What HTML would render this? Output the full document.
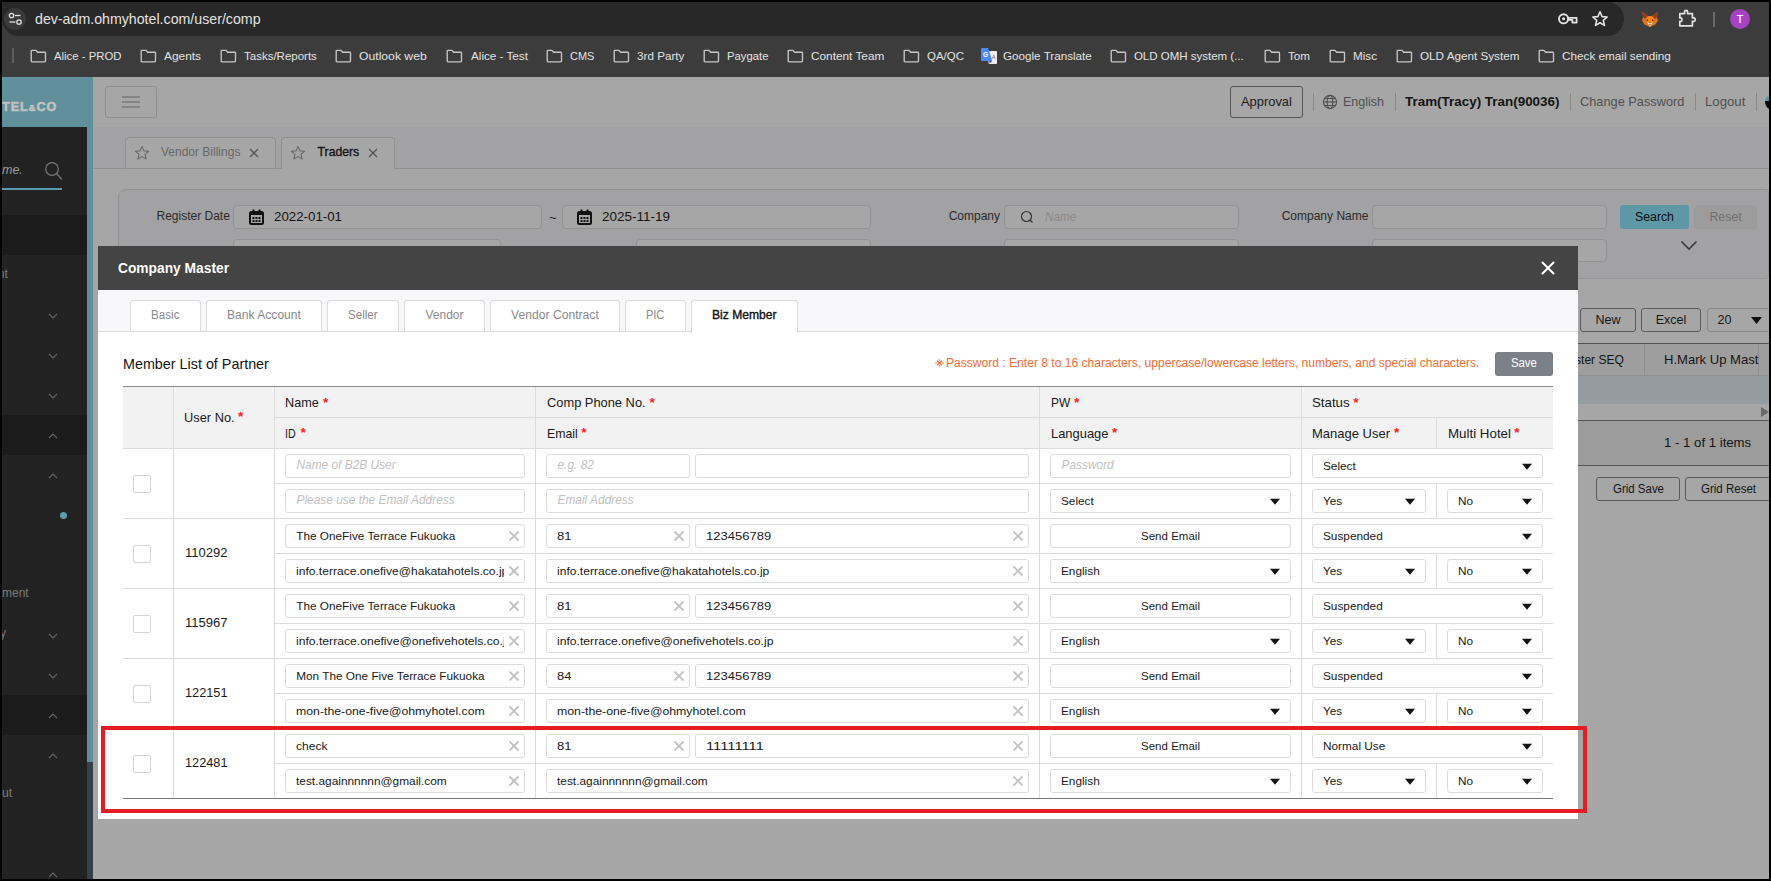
<!DOCTYPE html><html><head><meta charset="utf-8"><style>
html,body{margin:0;padding:0;}
body{width:1771px;height:881px;position:relative;overflow:hidden;background:#000;font-family:"Liberation Sans",sans-serif;}
.r{position:absolute;}
.t{position:absolute;white-space:nowrap;}
</style></head><body>
<div class="r" style="left:2px;top:2px;width:1767px;height:75px;background:#3c3c3c;"></div>
<div class="r" style="left:2px;top:2px;width:1622px;height:34px;background:#282828;border-radius:0 17px 17px 17px;"></div>
<div class="r" style="left:4px;top:8px;width:22px;height:22px;background:#3a3a3a;border-radius:50%;"></div>
<svg class="r" style="left:8px;top:12px;" width="16" height="14" viewBox="0 0 16 14"><g fill="none" stroke="#e3e3e3" stroke-width="1.3"><circle cx="3.5" cy="3.5" r="2.2"/><line x1="7" y1="3.5" x2="12.5" y2="3.5"/><circle cx="11" cy="10" r="2.2"/><line x1="1.5" y1="10" x2="7.5" y2="10"/></g></svg>
<div class="t" style="left:35.00px;top:11.68px;font-size:14.2px;line-height:14.2px;color:#e3e3e3;font-weight:normal;font-style:normal;">dev-adm.ohmyhotel.com/user/comp</div>
<svg class="r" style="left:1557px;top:12px;" width="22" height="14" viewBox="0 0 22 14"><circle cx="6.6" cy="6.8" r="4.6" fill="none" stroke="#e3e3e3" stroke-width="1.9"/><circle cx="6.6" cy="6.8" r="1.5" fill="#e3e3e3"/><path d="M11.2 5.8 H19.6 V10.6 H15.4 V7.8 H11.2 Z" fill="none" stroke="#e3e3e3" stroke-width="1.8" stroke-linejoin="round"/></svg>
<svg class="r" style="left:1591px;top:10px;" width="18" height="18" viewBox="0 0 18 18"><path d="M9 1.8 L11.1 6.6 L16.2 7 L12.3 10.4 L13.5 15.4 L9 12.7 L4.5 15.4 L5.7 10.4 L1.8 7 L6.9 6.6 Z" fill="none" stroke="#e3e3e3" stroke-width="1.6" stroke-linejoin="round"/></svg>
<svg class="r" style="left:1641px;top:11px;" width="18" height="17" viewBox="0 0 18 17"><path d="M1.5 1 L7 5.2 H11 L16.5 1 L16 6.5 L17 9.5 L14.5 13.5 L9 16 L3.5 13.5 L1 9.5 L2 6.5 Z" fill="#e2761b"/><path d="M1.5 1 L7 5.2 L4.5 8 L2 6.5 Z M16.5 1 L11 5.2 L13.5 8 L16 6.5 Z" fill="#9a3b10"/><path d="M4.5 8 L7 5.2 H11 L13.5 8 L12 11 H6 Z" fill="#f6851b"/><path d="M6 11 L9 15.8 L12 11 L9 12.5 Z" fill="#f0e6dc"/><path d="M7.6 13.4 L9 14.6 L10.4 13.4 Z" fill="#333"/><circle cx="6.2" cy="9.3" r="0.8" fill="#3a1a08"/><circle cx="11.8" cy="9.3" r="0.8" fill="#3a1a08"/></svg>
<svg class="r" style="left:1677px;top:9px;" width="21" height="19" viewBox="0 0 21 19"><path d="M2.8 4.6 H7.6 V2.6 Q7.6 1.4 9.1 1.4 Q10.6 1.4 10.6 2.6 V4.6 H15.4 V8.8 H17 Q18.2 8.8 18.2 10.6 Q18.2 12.4 17 12.4 H15.4 V16.8 H2.8 V12.4 H4.2 Q5 12.4 5 10.6 Q5 8.8 4.2 8.8 H2.8 Z" fill="none" stroke="#e3e3e3" stroke-width="1.7" stroke-linejoin="round"/></svg>
<div class="r" style="left:1713px;top:12px;width:2px;height:15px;background:#6a6a6a;"></div>
<div class="r" style="left:1730px;top:9px;width:20px;height:20px;background:#a742c4;border-radius:50%;"></div>
<div class="t" style="left:1736.49px;top:14.07px;font-size:11.5px;line-height:11.5px;color:#ffffff;font-weight:normal;font-style:normal;">T</div>
<div class="r" style="left:12px;top:48px;width:2px;height:15px;background:#5e5e5e;"></div>
<svg class="r" style="left:30px;top:49px;" width="17" height="14" viewBox="0 0 17 14"><path d="M1.2 2.2 Q1.2 1.4 2 1.4 H6 L7.6 3.2 H14.6 Q15.5 3.2 15.5 4 V12 Q15.5 12.8 14.6 12.8 H2 Q1.2 12.8 1.2 12 Z" fill="none" stroke="#c7c7c7" stroke-width="1.35" stroke-linejoin="round"/></svg>
<div class="t" style="left:54.20px;top:50.67px;font-size:11.5px;line-height:11.5px;color:#e3e3e3;font-weight:normal;font-style:normal;transform:scaleX(0.9858);transform-origin:0 0;">Alice - PROD</div>
<svg class="r" style="left:140px;top:49px;" width="17" height="14" viewBox="0 0 17 14"><path d="M1.2 2.2 Q1.2 1.4 2 1.4 H6 L7.6 3.2 H14.6 Q15.5 3.2 15.5 4 V12 Q15.5 12.8 14.6 12.8 H2 Q1.2 12.8 1.2 12 Z" fill="none" stroke="#c7c7c7" stroke-width="1.35" stroke-linejoin="round"/></svg>
<div class="t" style="left:164.00px;top:50.67px;font-size:11.5px;line-height:11.5px;color:#e3e3e3;font-weight:normal;font-style:normal;transform:scaleX(1.0334);transform-origin:0 0;">Agents</div>
<svg class="r" style="left:220px;top:49px;" width="17" height="14" viewBox="0 0 17 14"><path d="M1.2 2.2 Q1.2 1.4 2 1.4 H6 L7.6 3.2 H14.6 Q15.5 3.2 15.5 4 V12 Q15.5 12.8 14.6 12.8 H2 Q1.2 12.8 1.2 12 Z" fill="none" stroke="#c7c7c7" stroke-width="1.35" stroke-linejoin="round"/></svg>
<div class="t" style="left:244.00px;top:50.67px;font-size:11.5px;line-height:11.5px;color:#e3e3e3;font-weight:normal;font-style:normal;">Tasks/Reports</div>
<svg class="r" style="left:335px;top:49px;" width="17" height="14" viewBox="0 0 17 14"><path d="M1.2 2.2 Q1.2 1.4 2 1.4 H6 L7.6 3.2 H14.6 Q15.5 3.2 15.5 4 V12 Q15.5 12.8 14.6 12.8 H2 Q1.2 12.8 1.2 12 Z" fill="none" stroke="#c7c7c7" stroke-width="1.35" stroke-linejoin="round"/></svg>
<div class="t" style="left:359.20px;top:50.67px;font-size:11.5px;line-height:11.5px;color:#e3e3e3;font-weight:normal;font-style:normal;transform:scaleX(1.0591);transform-origin:0 0;">Outlook web</div>
<svg class="r" style="left:446px;top:49px;" width="17" height="14" viewBox="0 0 17 14"><path d="M1.2 2.2 Q1.2 1.4 2 1.4 H6 L7.6 3.2 H14.6 Q15.5 3.2 15.5 4 V12 Q15.5 12.8 14.6 12.8 H2 Q1.2 12.8 1.2 12 Z" fill="none" stroke="#c7c7c7" stroke-width="1.35" stroke-linejoin="round"/></svg>
<div class="t" style="left:470.50px;top:50.67px;font-size:11.5px;line-height:11.5px;color:#e3e3e3;font-weight:normal;font-style:normal;transform:scaleX(1.0155);transform-origin:0 0;">Alice - Test</div>
<svg class="r" style="left:546px;top:49px;" width="17" height="14" viewBox="0 0 17 14"><path d="M1.2 2.2 Q1.2 1.4 2 1.4 H6 L7.6 3.2 H14.6 Q15.5 3.2 15.5 4 V12 Q15.5 12.8 14.6 12.8 H2 Q1.2 12.8 1.2 12 Z" fill="none" stroke="#c7c7c7" stroke-width="1.35" stroke-linejoin="round"/></svg>
<div class="t" style="left:570.00px;top:50.67px;font-size:11.5px;line-height:11.5px;color:#e3e3e3;font-weight:normal;font-style:normal;transform:scaleX(0.9509);transform-origin:0 0;">CMS</div>
<svg class="r" style="left:613px;top:49px;" width="17" height="14" viewBox="0 0 17 14"><path d="M1.2 2.2 Q1.2 1.4 2 1.4 H6 L7.6 3.2 H14.6 Q15.5 3.2 15.5 4 V12 Q15.5 12.8 14.6 12.8 H2 Q1.2 12.8 1.2 12 Z" fill="none" stroke="#c7c7c7" stroke-width="1.35" stroke-linejoin="round"/></svg>
<div class="t" style="left:637.00px;top:50.67px;font-size:11.5px;line-height:11.5px;color:#e3e3e3;font-weight:normal;font-style:normal;transform:scaleX(1.0159);transform-origin:0 0;">3rd Party</div>
<svg class="r" style="left:703px;top:49px;" width="17" height="14" viewBox="0 0 17 14"><path d="M1.2 2.2 Q1.2 1.4 2 1.4 H6 L7.6 3.2 H14.6 Q15.5 3.2 15.5 4 V12 Q15.5 12.8 14.6 12.8 H2 Q1.2 12.8 1.2 12 Z" fill="none" stroke="#c7c7c7" stroke-width="1.35" stroke-linejoin="round"/></svg>
<div class="t" style="left:727.00px;top:50.67px;font-size:11.5px;line-height:11.5px;color:#e3e3e3;font-weight:normal;font-style:normal;transform:scaleX(0.9811);transform-origin:0 0;">Paygate</div>
<svg class="r" style="left:787px;top:49px;" width="17" height="14" viewBox="0 0 17 14"><path d="M1.2 2.2 Q1.2 1.4 2 1.4 H6 L7.6 3.2 H14.6 Q15.5 3.2 15.5 4 V12 Q15.5 12.8 14.6 12.8 H2 Q1.2 12.8 1.2 12 Z" fill="none" stroke="#c7c7c7" stroke-width="1.35" stroke-linejoin="round"/></svg>
<div class="t" style="left:810.70px;top:50.67px;font-size:11.5px;line-height:11.5px;color:#e3e3e3;font-weight:normal;font-style:normal;transform:scaleX(1.0268);transform-origin:0 0;">Content Team</div>
<svg class="r" style="left:903px;top:49px;" width="17" height="14" viewBox="0 0 17 14"><path d="M1.2 2.2 Q1.2 1.4 2 1.4 H6 L7.6 3.2 H14.6 Q15.5 3.2 15.5 4 V12 Q15.5 12.8 14.6 12.8 H2 Q1.2 12.8 1.2 12 Z" fill="none" stroke="#c7c7c7" stroke-width="1.35" stroke-linejoin="round"/></svg>
<div class="t" style="left:927.00px;top:50.67px;font-size:11.5px;line-height:11.5px;color:#e3e3e3;font-weight:normal;font-style:normal;">QA/QC</div>
<div class="t" style="left:1002.60px;top:50.67px;font-size:11.5px;line-height:11.5px;color:#e3e3e3;font-weight:normal;font-style:normal;transform:scaleX(1.0139);transform-origin:0 0;">Google Translate</div>
<svg class="r" style="left:1110px;top:49px;" width="17" height="14" viewBox="0 0 17 14"><path d="M1.2 2.2 Q1.2 1.4 2 1.4 H6 L7.6 3.2 H14.6 Q15.5 3.2 15.5 4 V12 Q15.5 12.8 14.6 12.8 H2 Q1.2 12.8 1.2 12 Z" fill="none" stroke="#c7c7c7" stroke-width="1.35" stroke-linejoin="round"/></svg>
<div class="t" style="left:1133.90px;top:50.67px;font-size:11.5px;line-height:11.5px;color:#e3e3e3;font-weight:normal;font-style:normal;">OLD OMH system (...</div>
<svg class="r" style="left:1264px;top:49px;" width="17" height="14" viewBox="0 0 17 14"><path d="M1.2 2.2 Q1.2 1.4 2 1.4 H6 L7.6 3.2 H14.6 Q15.5 3.2 15.5 4 V12 Q15.5 12.8 14.6 12.8 H2 Q1.2 12.8 1.2 12 Z" fill="none" stroke="#c7c7c7" stroke-width="1.35" stroke-linejoin="round"/></svg>
<div class="t" style="left:1288.00px;top:50.67px;font-size:11.5px;line-height:11.5px;color:#e3e3e3;font-weight:normal;font-style:normal;transform:scaleX(1.0126);transform-origin:0 0;">Tom</div>
<svg class="r" style="left:1329px;top:49px;" width="17" height="14" viewBox="0 0 17 14"><path d="M1.2 2.2 Q1.2 1.4 2 1.4 H6 L7.6 3.2 H14.6 Q15.5 3.2 15.5 4 V12 Q15.5 12.8 14.6 12.8 H2 Q1.2 12.8 1.2 12 Z" fill="none" stroke="#c7c7c7" stroke-width="1.35" stroke-linejoin="round"/></svg>
<div class="t" style="left:1353.40px;top:50.67px;font-size:11.5px;line-height:11.5px;color:#e3e3e3;font-weight:normal;font-style:normal;transform:scaleX(1.0154);transform-origin:0 0;">Misc</div>
<svg class="r" style="left:1396px;top:49px;" width="17" height="14" viewBox="0 0 17 14"><path d="M1.2 2.2 Q1.2 1.4 2 1.4 H6 L7.6 3.2 H14.6 Q15.5 3.2 15.5 4 V12 Q15.5 12.8 14.6 12.8 H2 Q1.2 12.8 1.2 12 Z" fill="none" stroke="#c7c7c7" stroke-width="1.35" stroke-linejoin="round"/></svg>
<div class="t" style="left:1419.60px;top:50.67px;font-size:11.5px;line-height:11.5px;color:#e3e3e3;font-weight:normal;font-style:normal;transform:scaleX(1.0164);transform-origin:0 0;">OLD Agent System</div>
<svg class="r" style="left:1538px;top:49px;" width="17" height="14" viewBox="0 0 17 14"><path d="M1.2 2.2 Q1.2 1.4 2 1.4 H6 L7.6 3.2 H14.6 Q15.5 3.2 15.5 4 V12 Q15.5 12.8 14.6 12.8 H2 Q1.2 12.8 1.2 12 Z" fill="none" stroke="#c7c7c7" stroke-width="1.35" stroke-linejoin="round"/></svg>
<div class="t" style="left:1562.00px;top:50.67px;font-size:11.5px;line-height:11.5px;color:#e3e3e3;font-weight:normal;font-style:normal;transform:scaleX(1.0201);transform-origin:0 0;">Check email sending</div>
<svg class="r" style="left:980px;top:47px;" width="18" height="18" viewBox="0 0 18 18"><rect x="8.5" y="4" width="8.5" height="13" rx="1" fill="#ececec"/><path d="M2 1 H8.2 L12.2 14 H2 Q1 14 1 13 V2 Q1 1 2 1 Z" fill="#4a8af4"/><path d="M9.2 14 H12.2 L9.6 16.4 Z" fill="#3b4fc4"/><text x="5.6" y="10.2" font-size="6.5" font-family="Liberation Sans" font-weight="bold" fill="#fff" text-anchor="middle">G</text><text x="13.6" y="12.2" font-size="5.5" fill="#667" text-anchor="middle" font-family="Liberation Sans">A</text></svg>
<div class="r" style="left:2px;top:77px;width:1767px;height:802px;background:#a6a6a6;"></div>
<div class="r" style="left:2px;top:77px;width:91px;height:50px;background:#5f909c;"></div>
<div class="t" style="left:2px;top:100px;font-size:12.5px;line-height:14px;color:#c4c0be;font-weight:bold;letter-spacing:1px;-webkit-text-stroke:0.6px #c4c0be;">TEL<span style="font-size:9.5px;letter-spacing:1px;">&amp;</span>CO</div>
<div class="r" style="left:2px;top:127px;width:85px;height:752px;background:#222222;"></div>
<div class="r" style="left:87px;top:127px;width:6px;height:635px;background:#5f909c;"></div>
<div class="r" style="left:87px;top:762px;width:6px;height:117px;background:#33424a;"></div>
<div class="r" style="left:2px;top:215px;width:85px;height:40px;background:#1b1b1b;"></div>
<div class="r" style="left:2px;top:415px;width:85px;height:40px;background:#1b1b1b;"></div>
<div class="r" style="left:2px;top:695px;width:85px;height:40px;background:#1b1b1b;"></div>
<div class="t" style="left:-13.98px;top:164.42px;font-size:12.5px;line-height:12.5px;color:#9a9a9a;font-weight:normal;font-style:italic;">Name.</div>
<svg class="r" style="left:44px;top:161px;" width="20" height="21" viewBox="0 0 20 21"><circle cx="8" cy="8" r="6.3" fill="none" stroke="#777" stroke-width="1.2"/><line x1="12.5" y1="12.5" x2="18" y2="18.5" stroke="#777" stroke-width="1.2"/></svg>
<div class="r" style="left:2px;top:188px;width:60px;height:2px;background:#5a9bab;"></div>
<div class="t" style="left:-35.53px;top:268.34px;font-size:12px;line-height:12px;color:#7a7a7a;font-weight:normal;font-style:normal;">Account</div>
<div class="t" style="left:-41.37px;top:587.34px;font-size:12px;line-height:12px;color:#7a7a7a;font-weight:normal;font-style:normal;">Management</div>
<div class="t" style="left:-42.69px;top:627.34px;font-size:12px;line-height:12px;color:#7a7a7a;font-weight:normal;font-style:normal;">Category</div>
<div class="t" style="left:-24.02px;top:787.34px;font-size:12px;line-height:12px;color:#7a7a7a;font-weight:normal;font-style:normal;">Layout</div>
<svg class="r" style="left:48px;top:313px;" width="10" height="6" viewBox="0 0 10 6"><path d="M1 1 L5 5 L9 1" fill="none" stroke="#666" stroke-width="1.1"/></svg>
<svg class="r" style="left:48px;top:353px;" width="10" height="6" viewBox="0 0 10 6"><path d="M1 1 L5 5 L9 1" fill="none" stroke="#666" stroke-width="1.1"/></svg>
<svg class="r" style="left:48px;top:393px;" width="10" height="6" viewBox="0 0 10 6"><path d="M1 1 L5 5 L9 1" fill="none" stroke="#666" stroke-width="1.1"/></svg>
<svg class="r" style="left:48px;top:633px;" width="10" height="6" viewBox="0 0 10 6"><path d="M1 1 L5 5 L9 1" fill="none" stroke="#666" stroke-width="1.1"/></svg>
<svg class="r" style="left:48px;top:673px;" width="10" height="6" viewBox="0 0 10 6"><path d="M1 1 L5 5 L9 1" fill="none" stroke="#666" stroke-width="1.1"/></svg>
<svg class="r" style="left:48px;top:433px;" width="10" height="6" viewBox="0 0 10 6"><path d="M1 5 L5 1 L9 5" fill="none" stroke="#666" stroke-width="1.1"/></svg>
<svg class="r" style="left:48px;top:473px;" width="10" height="6" viewBox="0 0 10 6"><path d="M1 5 L5 1 L9 5" fill="none" stroke="#666" stroke-width="1.1"/></svg>
<svg class="r" style="left:48px;top:713px;" width="10" height="6" viewBox="0 0 10 6"><path d="M1 5 L5 1 L9 5" fill="none" stroke="#666" stroke-width="1.1"/></svg>
<svg class="r" style="left:48px;top:753px;" width="10" height="6" viewBox="0 0 10 6"><path d="M1 5 L5 1 L9 5" fill="none" stroke="#666" stroke-width="1.1"/></svg>
<svg class="r" style="left:48px;top:872px;" width="10" height="6" viewBox="0 0 10 6"><path d="M1 5 L5 1 L9 5" fill="none" stroke="#666" stroke-width="1.1"/></svg>
<div class="r" style="left:60px;top:512px;width:7px;height:7px;background:#5f9aaa;border-radius:50%;"></div>
<div class="r" style="left:93px;top:77px;width:1676px;height:50px;background:#a6a6a6;"></div>
<div class="r" style="left:105px;top:86px;width:52px;height:32px;border:1px solid #8f8f8f;box-sizing:border-box;border-radius:3px;"></div>
<div class="r" style="left:122px;top:96px;width:18px;height:2px;background:#848484;"></div>
<div class="r" style="left:122px;top:101px;width:18px;height:2px;background:#848484;"></div>
<div class="r" style="left:122px;top:106px;width:18px;height:2px;background:#848484;"></div>
<div class="r" style="left:1230px;top:86px;width:73px;height:32px;border:1px solid #555;box-sizing:border-box;border-radius:3px;"></div>
<div class="t" style="left:1241.00px;top:96.08px;font-size:12.9px;line-height:12.9px;color:#1a1a1a;font-weight:normal;font-style:normal;">Approval</div>
<div class="r" style="left:1313px;top:93px;width:1px;height:18px;background:#8a8a8a;"></div>
<div class="r" style="left:1395px;top:93px;width:1px;height:18px;background:#8a8a8a;"></div>
<div class="r" style="left:1570px;top:93px;width:1px;height:18px;background:#8a8a8a;"></div>
<div class="r" style="left:1695px;top:93px;width:1px;height:18px;background:#8a8a8a;"></div>
<div class="r" style="left:1756px;top:93px;width:1px;height:18px;background:#8a8a8a;"></div>
<svg class="r" style="left:1322px;top:94px;" width="16" height="16" viewBox="0 0 16 16"><g fill="none" stroke="#505050" stroke-width="1.1"><circle cx="8" cy="8" r="6.6"/><ellipse cx="8" cy="8" rx="2.8" ry="6.6"/><line x1="1.4" y1="8" x2="14.6" y2="8"/><path d="M2.5 4.5 H13.5 M2.5 11.5 H13.5"/></g></svg>
<div class="t" style="left:1343.00px;top:95.88px;font-size:12.9px;line-height:12.9px;color:#505050;font-weight:normal;font-style:normal;transform:scaleX(0.9690);transform-origin:0 0;">English</div>
<div class="t" style="left:1404.50px;top:94.74px;font-size:13.3px;line-height:13.3px;color:#141414;font-weight:bold;font-style:normal;transform:scaleX(1.0096);transform-origin:0 0;">Tram(Tracy) Tran(90036)</div>
<div class="t" style="left:1580.00px;top:95.88px;font-size:12.9px;line-height:12.9px;color:#505050;font-weight:normal;font-style:normal;transform:scaleX(0.9913);transform-origin:0 0;">Change Password</div>
<div class="t" style="left:1705.40px;top:95.88px;font-size:12.9px;line-height:12.9px;color:#505050;font-weight:normal;font-style:normal;transform:scaleX(1.0239);transform-origin:0 0;">Logout</div>
<div class="r" style="left:1765px;top:94px;width:16px;height:16px;border-radius:50%;background:linear-gradient(#5b97a6 0 45%,#0a0a0a 45%);"></div>
<div class="r" style="left:93px;top:127px;width:1676px;height:42px;background:#a2a1a3;"></div>
<div class="r" style="left:93px;top:168px;width:1676px;height:1px;background:#8f8f8f;"></div>
<div class="r" style="left:125px;top:137px;width:151px;height:32px;background:#a6a6a6;border:1px solid #8f8f8f;box-sizing:border-box;border-radius:4px 4px 0 0;"></div>
<div class="r" style="left:281px;top:137px;width:114px;height:32px;background:#a6a6a6;border:1px solid #8f8f8f;box-sizing:border-box;border-radius:4px 4px 0 0;border-bottom:none;"></div>
<svg class="r" style="left:133.5px;top:144.5px;" width="16" height="16" viewBox="0 0 16 16"><path d="M8 1.5 L9.9 5.9 L14.6 6.3 L11 9.4 L12.1 14 L8 11.6 L3.9 14 L5 9.4 L1.4 6.3 L6.1 5.9 Z" fill="none" stroke="#6a6a6a" stroke-width="1.1" stroke-linejoin="round"/></svg>
<div class="t" style="left:161.00px;top:146.34px;font-size:12px;line-height:12px;color:#686868;font-weight:normal;font-style:normal;">Vendor Billings</div>
<svg class="r" style="left:249.0px;top:148.0px;" width="10" height="10" viewBox="0 0 10 10"><path d="M1 1 L9 9 M9 1 L1 9" stroke="#555" stroke-width="1.3"/></svg>
<svg class="r" style="left:290px;top:144.5px;" width="16" height="16" viewBox="0 0 16 16"><path d="M8 1.5 L9.9 5.9 L14.6 6.3 L11 9.4 L12.1 14 L8 11.6 L3.9 14 L5 9.4 L1.4 6.3 L6.1 5.9 Z" fill="none" stroke="#6a6a6a" stroke-width="1.1" stroke-linejoin="round"/></svg>
<div class="t" style="left:317.60px;top:146.17px;font-size:12.2px;line-height:12.2px;color:#151515;font-weight:normal;font-style:normal;-webkit-text-stroke:0.35px #151515;">Traders</div>
<svg class="r" style="left:368.0px;top:148.0px;" width="10" height="10" viewBox="0 0 10 10"><path d="M1 1 L9 9 M9 1 L1 9" stroke="#555" stroke-width="1.3"/></svg>
<div class="r" style="left:118px;top:189px;width:1651px;height:90px;background:#a2a1a3;border:1px solid #939393;box-sizing:border-box;border-radius:8px 3px 3px 8px;"></div>
<div class="t" style="left:156.50px;top:210.34px;font-size:12px;line-height:12px;color:#2a2a2a;font-weight:normal;font-style:normal;">Register Date</div>
<div class="r" style="left:233px;top:205px;width:309px;height:24px;background:#a6a6a6;border:1px solid #939393;box-sizing:border-box;border-radius:4px;"></div>
<svg class="r" style="left:249px;top:209px;" width="15" height="16" viewBox="0 0 15 16"><rect x="1" y="3" width="13" height="12" rx="1.5" fill="none" stroke="#111" stroke-width="2"/><rect x="1" y="3" width="13" height="3" fill="#111"/><rect x="3.5" y="0.5" width="2" height="4" fill="#111"/><rect x="9.5" y="0.5" width="2" height="4" fill="#111"/><g fill="#111"><rect x="3.5" y="8" width="2" height="2"/><rect x="6.5" y="8" width="2" height="2"/><rect x="9.5" y="8" width="2" height="2"/><rect x="3.5" y="11" width="2" height="2"/><rect x="6.5" y="11" width="2" height="2"/><rect x="9.5" y="11" width="2" height="2"/></g></svg>
<div class="t" style="left:274.00px;top:210.00px;font-size:13px;line-height:13px;color:#141414;font-weight:normal;font-style:normal;transform:scaleX(1.0225);transform-origin:0 0;">2022-01-01</div>
<div class="t" style="left:549.00px;top:211.00px;font-size:13px;line-height:13px;color:#222;font-weight:normal;font-style:normal;">~</div>
<div class="r" style="left:562px;top:205px;width:309px;height:24px;background:#a6a6a6;border:1px solid #939393;box-sizing:border-box;border-radius:4px;"></div>
<svg class="r" style="left:577px;top:209px;" width="15" height="16" viewBox="0 0 15 16"><rect x="1" y="3" width="13" height="12" rx="1.5" fill="none" stroke="#111" stroke-width="2"/><rect x="1" y="3" width="13" height="3" fill="#111"/><rect x="3.5" y="0.5" width="2" height="4" fill="#111"/><rect x="9.5" y="0.5" width="2" height="4" fill="#111"/><g fill="#111"><rect x="3.5" y="8" width="2" height="2"/><rect x="6.5" y="8" width="2" height="2"/><rect x="9.5" y="8" width="2" height="2"/><rect x="3.5" y="11" width="2" height="2"/><rect x="6.5" y="11" width="2" height="2"/><rect x="9.5" y="11" width="2" height="2"/></g></svg>
<div class="t" style="left:602.00px;top:210.00px;font-size:13px;line-height:13px;color:#141414;font-weight:normal;font-style:normal;transform:scaleX(1.0376);transform-origin:0 0;">2025-11-19</div>
<div class="t" style="left:948.70px;top:210.34px;font-size:12px;line-height:12px;color:#2a2a2a;font-weight:normal;font-style:normal;">Company</div>
<div class="r" style="left:1004px;top:205px;width:235px;height:24px;background:#a6a6a6;border:1px solid #939393;box-sizing:border-box;border-radius:4px;"></div>
<svg class="r" style="left:1020px;top:210px;" width="14" height="14" viewBox="0 0 14 14"><circle cx="6.5" cy="6.5" r="5" fill="none" stroke="#333" stroke-width="1.2"/><line x1="10" y1="10" x2="12.5" y2="12.5" stroke="#333" stroke-width="1.2"/></svg>
<div class="t" style="left:1045.30px;top:210.84px;font-size:12px;line-height:12px;color:#8a8a8a;font-weight:normal;font-style:italic;transform:scaleX(0.9747);transform-origin:0 0;">Name</div>
<div class="t" style="left:1281.70px;top:210.34px;font-size:12px;line-height:12px;color:#2a2a2a;font-weight:normal;font-style:normal;">Company Name</div>
<div class="r" style="left:1372px;top:205px;width:235px;height:24px;background:#a6a6a6;border:1px solid #939393;box-sizing:border-box;border-radius:4px;"></div>
<div class="r" style="left:1620px;top:205px;width:69px;height:24px;background:#5e98a7;border-radius:3px;"></div>
<div class="t" style="left:1635.01px;top:210.59px;font-size:12.3px;line-height:12.3px;color:#0d0d0d;font-weight:normal;font-style:normal;">Search</div>
<div class="r" style="left:1694px;top:205px;width:63px;height:24px;background:#9c9c9c;border-radius:3px;"></div>
<div class="t" style="left:1709.43px;top:210.59px;font-size:12.3px;line-height:12.3px;color:#707070;font-weight:normal;font-style:normal;">Reset</div>
<div class="r" style="left:233px;top:239px;width:268px;height:23px;background:#a6a6a6;border:1px solid #939393;box-sizing:border-box;border-radius:4px;"></div>
<div class="r" style="left:636px;top:239px;width:235px;height:23px;background:#a6a6a6;border:1px solid #939393;box-sizing:border-box;border-radius:4px;"></div>
<div class="r" style="left:1004px;top:239px;width:235px;height:23px;background:#a6a6a6;border:1px solid #939393;box-sizing:border-box;border-radius:4px;"></div>
<div class="r" style="left:1372px;top:239px;width:235px;height:23px;background:#a6a6a6;border:1px solid #939393;box-sizing:border-box;border-radius:4px;"></div>
<svg class="r" style="left:1680px;top:240px;" width="18" height="11" viewBox="0 0 18 11"><path d="M1.5 1.5 L9 9 L16.5 1.5" fill="none" stroke="#3a3a3a" stroke-width="1.6"/></svg>
<div class="r" style="left:1580px;top:308px;width:56px;height:24px;background:#a6a6a6;border:1px solid #5a5a5a;box-sizing:border-box;border-radius:3px;"></div>
<div class="t" style="left:1595.50px;top:313.92px;font-size:12.5px;line-height:12.5px;color:#151515;font-weight:normal;font-style:normal;">New</div>
<div class="r" style="left:1641px;top:308px;width:60px;height:24px;background:#a6a6a6;border:1px solid #5a5a5a;box-sizing:border-box;border-radius:3px;"></div>
<div class="t" style="left:1655.72px;top:313.92px;font-size:12.5px;line-height:12.5px;color:#151515;font-weight:normal;font-style:normal;">Excel</div>
<div class="r" style="left:1707px;top:308px;width:83px;height:24px;background:#a6a6a6;border:1px solid #8a8a8a;box-sizing:border-box;border-radius:3px;"></div>
<div class="t" style="left:1717.60px;top:313.92px;font-size:12.5px;line-height:12.5px;color:#151515;font-weight:normal;font-style:normal;">20</div>
<svg class="r" style="left:1751px;top:317px;" width="11" height="7" viewBox="0 0 11 7"><path d="M0 0 H11 L5.5 7 Z" fill="#111"/></svg>
<div class="r" style="left:1578px;top:343px;width:191px;height:1px;background:#555;"></div>
<div class="r" style="left:1578px;top:344px;width:191px;height:32px;background:#9e9e9e;"></div>
<div class="r" style="left:1578px;top:375px;width:191px;height:1px;background:#8f8f8f;"></div>
<div class="r" style="left:1644px;top:344px;width:1px;height:60px;background:#8f8f8f;"></div>
<div class="r" style="left:1758px;top:344px;width:1px;height:32px;background:#8f8f8f;"></div>
<div class="t" style="left:1575.00px;top:353.00px;font-size:13px;line-height:13px;color:#151515;font-weight:normal;font-style:normal;transform:scaleX(0.9291);transform-origin:0 0;">ster SEQ</div>
<div class="t" style="left:1663.60px;top:353.00px;font-size:13px;line-height:13px;color:#151515;font-weight:normal;font-style:normal;transform:scaleX(1.0053);transform-origin:0 0;">H.Mark Up Mast</div>
<div class="r" style="left:1578px;top:376px;width:191px;height:28px;background:#959c9f;"></div>
<svg class="r" style="left:1761px;top:407px;" width="8" height="10" viewBox="0 0 8 10"><path d="M0 0 L8 5 L0 10 Z" fill="#6a6a6a"/></svg>
<div class="r" style="left:1578px;top:420px;width:191px;height:1px;background:#555;"></div>
<div class="r" style="left:1578px;top:421px;width:191px;height:44px;background:#9c9c9c;"></div>
<div class="r" style="left:1578px;top:465px;width:191px;height:1px;background:#555;"></div>
<div class="t" style="left:1664.40px;top:436.20px;font-size:13px;line-height:13px;color:#151515;font-weight:normal;font-style:normal;transform:scaleX(1.0142);transform-origin:0 0;">1 - 1 of 1 items</div>
<div class="r" style="left:1596px;top:477px;width:84px;height:24px;background:#a6a6a6;border:1px solid #5a5a5a;box-sizing:border-box;border-radius:3px;"></div>
<div class="t" style="left:1612.50px;top:482.92px;font-size:12.5px;line-height:12.5px;color:#151515;font-weight:normal;font-style:normal;transform:scaleX(0.9176);transform-origin:0 0;">Grid Save</div>
<div class="r" style="left:1685px;top:477px;width:105px;height:24px;background:#a6a6a6;border:1px solid #5a5a5a;box-sizing:border-box;border-radius:3px;"></div>
<div class="t" style="left:1701.00px;top:482.92px;font-size:12.5px;line-height:12.5px;color:#151515;font-weight:normal;font-style:normal;transform:scaleX(0.9206);transform-origin:0 0;">Grid Reset</div>
<div class="r" style="left:98px;top:246px;width:1480px;height:44px;background:#444444;"></div>
<div class="t" style="left:118.00px;top:261.35px;font-size:14px;line-height:14px;color:#ffffff;font-weight:bold;font-style:normal;transform:scaleX(0.9840);transform-origin:0 0;">Company Master</div>
<svg class="r" style="left:1541px;top:261px;" width="14" height="14" viewBox="0 0 14 14"><path d="M1.5 1.5 L12.5 12.5 M12.5 1.5 L1.5 12.5" stroke="#fff" stroke-width="2.1" stroke-linecap="round"/></svg>
<div class="r" style="left:98px;top:290px;width:1480px;height:42px;background:#f8f7fa;"></div>
<div class="r" style="left:98px;top:331px;width:1480px;height:1px;background:#dcdcdc;"></div>
<div class="r" style="left:98px;top:332px;width:1480px;height:487px;background:#ffffff;"></div>
<div class="r" style="left:130px;top:300px;width:71px;height:32px;background:#ffffff;border:1px solid #dcdcdc;box-sizing:border-box;border-radius:3px 3px 0 0;"></div>
<div class="t" style="left:151.25px;top:309.24px;font-size:12px;line-height:12px;color:#8a8a8a;font-weight:normal;font-style:normal;transform:scaleX(0.9712);transform-origin:0 0;">Basic</div>
<div class="r" style="left:206px;top:300px;width:116px;height:32px;background:#ffffff;border:1px solid #dcdcdc;box-sizing:border-box;border-radius:3px 3px 0 0;"></div>
<div class="t" style="left:227.05px;top:309.24px;font-size:12px;line-height:12px;color:#8a8a8a;font-weight:normal;font-style:normal;transform:scaleX(1.0070);transform-origin:0 0;">Bank Account</div>
<div class="r" style="left:327px;top:300px;width:72px;height:32px;background:#ffffff;border:1px solid #dcdcdc;box-sizing:border-box;border-radius:3px 3px 0 0;"></div>
<div class="t" style="left:348.15px;top:309.24px;font-size:12px;line-height:12px;color:#8a8a8a;font-weight:normal;font-style:normal;transform:scaleX(0.9680);transform-origin:0 0;">Seller</div>
<div class="r" style="left:404px;top:300px;width:81px;height:32px;background:#ffffff;border:1px solid #dcdcdc;box-sizing:border-box;border-radius:3px 3px 0 0;"></div>
<div class="t" style="left:425.45px;top:309.24px;font-size:12px;line-height:12px;color:#8a8a8a;font-weight:normal;font-style:normal;">Vendor</div>
<div class="r" style="left:490px;top:300px;width:130px;height:32px;background:#ffffff;border:1px solid #dcdcdc;box-sizing:border-box;border-radius:3px 3px 0 0;"></div>
<div class="t" style="left:511.10px;top:309.24px;font-size:12px;line-height:12px;color:#8a8a8a;font-weight:normal;font-style:normal;transform:scaleX(1.0124);transform-origin:0 0;">Vendor Contract</div>
<div class="r" style="left:625px;top:300px;width:61px;height:32px;background:#ffffff;border:1px solid #dcdcdc;box-sizing:border-box;border-radius:3px 3px 0 0;"></div>
<div class="t" style="left:646.35px;top:309.24px;font-size:12px;line-height:12px;color:#8a8a8a;font-weight:normal;font-style:normal;transform:scaleX(0.9148);transform-origin:0 0;">PIC</div>
<div class="r" style="left:691px;top:300px;width:107px;height:32px;background:#ffffff;border:1px solid #dcdcdc;box-sizing:border-box;border-radius:3px 3px 0 0;border-bottom:none;height:33px;"></div>
<div class="t" style="left:712.20px;top:309.24px;font-size:12px;line-height:12px;color:#111111;font-weight:normal;font-style:normal;transform:scaleX(1.0091);transform-origin:0 0;-webkit-text-stroke:0.35px #111;">Biz Member</div>
<div class="t" style="left:123.20px;top:356.88px;font-size:14.2px;line-height:14.2px;color:#151515;font-weight:normal;font-style:normal;transform:scaleX(1.0109);transform-origin:0 0;">Member List of Partner</div>
<svg class="r" style="left:935px;top:359px;" width="9" height="8" viewBox="0 0 9 8"><path d="M2 1.6 L7 6.4 M7 1.6 L2 6.4" stroke="#f8692f" stroke-width="1.3"/><g fill="#f8692f"><circle cx="4.5" cy="1" r="0.8"/><circle cx="4.5" cy="7" r="0.8"/><circle cx="1" cy="4" r="0.8"/><circle cx="8" cy="4" r="0.8"/></g></svg>
<div class="t" style="left:946.00px;top:356.54px;font-size:12px;line-height:12px;color:#f66c34;font-weight:normal;font-style:normal;transform:scaleX(1.0059);transform-origin:0 0;">Password : Enter 8 to 16 characters, uppercase/lowercase letters, numbers, and special characters.</div>
<div class="r" style="left:1495px;top:352px;width:58px;height:24px;background:#7b8189;border-radius:3px;"></div>
<div class="t" style="left:1511.10px;top:357.02px;font-size:12.5px;line-height:12.5px;color:#ffffff;font-weight:normal;font-style:normal;transform:scaleX(0.9055);transform-origin:0 0;">Save</div>
<div class="r" style="left:123px;top:386px;width:1430px;height:1px;background:#888888;"></div>
<div class="r" style="left:123px;top:387px;width:1430px;height:61px;background:#f2f2f2;"></div>
<div class="r" style="left:274px;top:417px;width:1279px;height:1px;background:#dcdcdc;"></div>
<div class="r" style="left:123px;top:448px;width:1430px;height:1px;background:#dcdcdc;"></div>
<div class="r" style="left:1436px;top:418px;width:1px;height:30px;background:#dcdcdc;"></div>
<div class="t" style="left:183.60px;top:410.70px;font-size:13px;line-height:13px;color:#1a1a1a;font-weight:normal;font-style:normal;transform:scaleX(0.9865);transform-origin:0 0;">User No.</div>
<div class="t" style="left:238.00px;top:410.27px;font-size:13.5px;line-height:13.5px;color:#ff1a1a;font-weight:bold;font-style:normal;">*</div>
<div class="t" style="left:285.30px;top:396.00px;font-size:13px;line-height:13px;color:#1a1a1a;font-weight:normal;font-style:normal;transform:scaleX(0.9747);transform-origin:0 0;">Name</div>
<div class="t" style="left:323.00px;top:395.57px;font-size:13.5px;line-height:13.5px;color:#ff1a1a;font-weight:bold;font-style:normal;">*</div>
<div class="t" style="left:285.30px;top:426.60px;font-size:13px;line-height:13px;color:#1a1a1a;font-weight:normal;font-style:normal;transform:scaleX(0.8231);transform-origin:0 0;">ID</div>
<div class="t" style="left:300.50px;top:426.17px;font-size:13.5px;line-height:13.5px;color:#ff1a1a;font-weight:bold;font-style:normal;">*</div>
<div class="t" style="left:546.80px;top:396.00px;font-size:13px;line-height:13px;color:#1a1a1a;font-weight:normal;font-style:normal;transform:scaleX(0.9887);transform-origin:0 0;">Comp Phone No.</div>
<div class="t" style="left:649.50px;top:395.57px;font-size:13.5px;line-height:13.5px;color:#ff1a1a;font-weight:bold;font-style:normal;">*</div>
<div class="t" style="left:546.80px;top:426.60px;font-size:13px;line-height:13px;color:#1a1a1a;font-weight:normal;font-style:normal;transform:scaleX(0.9475);transform-origin:0 0;">Email</div>
<div class="t" style="left:581.30px;top:426.17px;font-size:13.5px;line-height:13.5px;color:#ff1a1a;font-weight:bold;font-style:normal;">*</div>
<div class="t" style="left:1050.50px;top:396.00px;font-size:13px;line-height:13px;color:#1a1a1a;font-weight:normal;font-style:normal;transform:scaleX(0.9169);transform-origin:0 0;">PW</div>
<div class="t" style="left:1073.90px;top:395.57px;font-size:13.5px;line-height:13.5px;color:#ff1a1a;font-weight:bold;font-style:normal;">*</div>
<div class="t" style="left:1050.50px;top:426.60px;font-size:13px;line-height:13px;color:#1a1a1a;font-weight:normal;font-style:normal;transform:scaleX(0.9941);transform-origin:0 0;">Language</div>
<div class="t" style="left:1111.90px;top:426.17px;font-size:13.5px;line-height:13.5px;color:#ff1a1a;font-weight:bold;font-style:normal;">*</div>
<div class="t" style="left:1312.00px;top:396.00px;font-size:13px;line-height:13px;color:#1a1a1a;font-weight:normal;font-style:normal;transform:scaleX(1.0202);transform-origin:0 0;">Status</div>
<div class="t" style="left:1353.30px;top:395.57px;font-size:13.5px;line-height:13.5px;color:#ff1a1a;font-weight:bold;font-style:normal;">*</div>
<div class="t" style="left:1312.00px;top:426.60px;font-size:13px;line-height:13px;color:#1a1a1a;font-weight:normal;font-style:normal;">Manage User</div>
<div class="t" style="left:1394.10px;top:426.17px;font-size:13.5px;line-height:13.5px;color:#ff1a1a;font-weight:bold;font-style:normal;">*</div>
<div class="t" style="left:1447.50px;top:426.60px;font-size:13px;line-height:13px;color:#1a1a1a;font-weight:normal;font-style:normal;transform:scaleX(1.0259);transform-origin:0 0;">Multi Hotel</div>
<div class="t" style="left:1514.30px;top:426.17px;font-size:13.5px;line-height:13.5px;color:#ff1a1a;font-weight:bold;font-style:normal;">*</div>
<div class="r" style="left:173px;top:387px;width:1px;height:411px;background:#dcdcdc;"></div>
<div class="r" style="left:274px;top:387px;width:1px;height:411px;background:#dcdcdc;"></div>
<div class="r" style="left:535px;top:387px;width:1px;height:411px;background:#dcdcdc;"></div>
<div class="r" style="left:1039px;top:387px;width:1px;height:411px;background:#dcdcdc;"></div>
<div class="r" style="left:1301px;top:387px;width:1px;height:411px;background:#dcdcdc;"></div>
<div class="r" style="left:274px;top:483px;width:1279px;height:1px;background:#dcdcdc;"></div>
<div class="r" style="left:123px;top:518px;width:1430px;height:1px;background:#dcdcdc;"></div>
<div class="r" style="left:1436px;top:484px;width:1px;height:34px;background:#dcdcdc;"></div>
<div class="r" style="left:133px;top:475px;width:18px;height:18px;background:#ffffff;border:1px solid #d4d4d4;box-sizing:border-box;border-radius:2px;"></div>
<div class="r" style="left:285px;top:454px;width:240px;height:24px;background:#ffffff;border:1px solid #dcdcdc;box-sizing:border-box;border-radius:3px;"></div>
<div class="t" style="left:296.50px;top:460.13px;font-size:11.9px;line-height:11.9px;color:#c2c2c2;font-weight:normal;font-style:italic;">Name of B2B User</div>
<div class="r" style="left:285px;top:489px;width:240px;height:24px;background:#ffffff;border:1px solid #dcdcdc;box-sizing:border-box;border-radius:3px;"></div>
<div class="t" style="left:296.50px;top:495.13px;font-size:11.9px;line-height:11.9px;color:#c2c2c2;font-weight:normal;font-style:italic;">Please use the Email Address</div>
<div class="r" style="left:546px;top:454px;width:144px;height:24px;background:#ffffff;border:1px solid #dcdcdc;box-sizing:border-box;border-radius:3px;"></div>
<div class="t" style="left:557.50px;top:460.13px;font-size:11.9px;line-height:11.9px;color:#c2c2c2;font-weight:normal;font-style:italic;">e.g. 82</div>
<div class="r" style="left:695px;top:454px;width:334px;height:24px;background:#ffffff;border:1px solid #dcdcdc;box-sizing:border-box;border-radius:3px;"></div>
<div class="r" style="left:546px;top:489px;width:483px;height:24px;background:#ffffff;border:1px solid #dcdcdc;box-sizing:border-box;border-radius:3px;"></div>
<div class="t" style="left:557.50px;top:495.13px;font-size:11.9px;line-height:11.9px;color:#c2c2c2;font-weight:normal;font-style:italic;">Email Address</div>
<div class="r" style="left:1050px;top:454px;width:241px;height:24px;background:#ffffff;border:1px solid #dcdcdc;box-sizing:border-box;border-radius:3px;"></div>
<div class="t" style="left:1061.50px;top:460.13px;font-size:11.9px;line-height:11.9px;color:#c2c2c2;font-weight:normal;font-style:italic;">Password</div>
<div class="r" style="left:1050px;top:489px;width:241px;height:24px;background:#ffffff;border:1px solid #dcdcdc;box-sizing:border-box;border-radius:3px;"></div>
<div class="t" style="left:1061.00px;top:495.61px;font-size:11.8px;line-height:11.8px;color:#1a1a1a;font-weight:normal;font-style:normal;">Select</div>
<svg class="r" style="left:1270px;top:497.5px;" width="10" height="7" viewBox="0 0 10 7"><path d="M0 0.8 H10 L5 6.8 Z" fill="#111"/></svg>
<div class="r" style="left:1312px;top:454px;width:231px;height:24px;background:#ffffff;border:1px solid #dcdcdc;box-sizing:border-box;border-radius:3px;"></div>
<div class="t" style="left:1323.00px;top:460.61px;font-size:11.8px;line-height:11.8px;color:#1a1a1a;font-weight:normal;font-style:normal;">Select</div>
<svg class="r" style="left:1522px;top:462.5px;" width="10" height="7" viewBox="0 0 10 7"><path d="M0 0.8 H10 L5 6.8 Z" fill="#111"/></svg>
<div class="r" style="left:1312px;top:489px;width:114px;height:24px;background:#ffffff;border:1px solid #dcdcdc;box-sizing:border-box;border-radius:3px;"></div>
<div class="t" style="left:1323.00px;top:495.61px;font-size:11.8px;line-height:11.8px;color:#1a1a1a;font-weight:normal;font-style:normal;">Yes</div>
<svg class="r" style="left:1405px;top:497.5px;" width="10" height="7" viewBox="0 0 10 7"><path d="M0 0.8 H10 L5 6.8 Z" fill="#111"/></svg>
<div class="r" style="left:1447px;top:489px;width:96px;height:24px;background:#ffffff;border:1px solid #dcdcdc;box-sizing:border-box;border-radius:3px;"></div>
<div class="t" style="left:1458.00px;top:495.61px;font-size:11.8px;line-height:11.8px;color:#1a1a1a;font-weight:normal;font-style:normal;">No</div>
<svg class="r" style="left:1522px;top:497.5px;" width="10" height="7" viewBox="0 0 10 7"><path d="M0 0.8 H10 L5 6.8 Z" fill="#111"/></svg>
<div class="r" style="left:274px;top:553px;width:1279px;height:1px;background:#dcdcdc;"></div>
<div class="r" style="left:123px;top:588px;width:1430px;height:1px;background:#dcdcdc;"></div>
<div class="r" style="left:1436px;top:554px;width:1px;height:34px;background:#dcdcdc;"></div>
<div class="r" style="left:133px;top:545px;width:18px;height:18px;background:#ffffff;border:1px solid #d4d4d4;box-sizing:border-box;border-radius:2px;"></div>
<div class="t" style="left:184.50px;top:546.92px;font-size:12.5px;line-height:12.5px;color:#1a1a1a;font-weight:normal;font-style:normal;transform:scaleX(1.0420);transform-origin:0 0;">110292</div>
<div class="r" style="left:285px;top:524px;width:240px;height:24px;background:#ffffff;border:1px solid #dcdcdc;box-sizing:border-box;border-radius:3px;"></div>
<div class="t" style="left:296.20px;top:530.71px;font-size:11.8px;line-height:11.8px;color:#1a1a1a;font-weight:normal;font-style:normal;">The OneFive Terrace Fukuoka</div>
<svg class="r" style="left:508px;top:530px;" width="12" height="12" viewBox="0 0 12 12"><path d="M1.5 1.5 L10.5 10.5 M10.5 1.5 L1.5 10.5" stroke="#c4c4c4" stroke-width="1.9"/></svg>
<div class="r" style="left:285px;top:559px;width:240px;height:24px;background:#ffffff;border:1px solid #dcdcdc;box-sizing:border-box;border-radius:3px;"></div>
<div class="r" style="left:296px;top:559px;width:208px;height:24px;overflow:hidden;">
<div class="t" style="left:0.20px;top:6.71px;font-size:11.8px;line-height:11.8px;color:#1a1a1a;font-weight:normal;font-style:normal;transform:scaleX(1.0238);transform-origin:0 0;">info.terrace.onefive@hakatahotels.co.jp</div>
</div>
<svg class="r" style="left:508px;top:565px;" width="12" height="12" viewBox="0 0 12 12"><path d="M1.5 1.5 L10.5 10.5 M10.5 1.5 L1.5 10.5" stroke="#c4c4c4" stroke-width="1.9"/></svg>
<div class="r" style="left:546px;top:524px;width:144px;height:24px;background:#ffffff;border:1px solid #dcdcdc;box-sizing:border-box;border-radius:3px;"></div>
<div class="t" style="left:557.20px;top:530.71px;font-size:11.8px;line-height:11.8px;color:#1a1a1a;font-weight:normal;font-style:normal;transform:scaleX(1.1032);transform-origin:0 0;">81</div>
<svg class="r" style="left:673px;top:530px;" width="12" height="12" viewBox="0 0 12 12"><path d="M1.5 1.5 L10.5 10.5 M10.5 1.5 L1.5 10.5" stroke="#c4c4c4" stroke-width="1.9"/></svg>
<div class="r" style="left:695px;top:524px;width:334px;height:24px;background:#ffffff;border:1px solid #dcdcdc;box-sizing:border-box;border-radius:3px;"></div>
<div class="t" style="left:706.20px;top:530.71px;font-size:11.8px;line-height:11.8px;color:#1a1a1a;font-weight:normal;font-style:normal;transform:scaleX(1.1032);transform-origin:0 0;">123456789</div>
<svg class="r" style="left:1012px;top:530px;" width="12" height="12" viewBox="0 0 12 12"><path d="M1.5 1.5 L10.5 10.5 M10.5 1.5 L1.5 10.5" stroke="#c4c4c4" stroke-width="1.9"/></svg>
<div class="r" style="left:546px;top:559px;width:483px;height:24px;background:#ffffff;border:1px solid #dcdcdc;box-sizing:border-box;border-radius:3px;"></div>
<div class="t" style="left:557.20px;top:565.71px;font-size:11.8px;line-height:11.8px;color:#1a1a1a;font-weight:normal;font-style:normal;transform:scaleX(1.0238);transform-origin:0 0;">info.terrace.onefive@hakatahotels.co.jp</div>
<svg class="r" style="left:1012px;top:565px;" width="12" height="12" viewBox="0 0 12 12"><path d="M1.5 1.5 L10.5 10.5 M10.5 1.5 L1.5 10.5" stroke="#c4c4c4" stroke-width="1.9"/></svg>
<div class="r" style="left:1050px;top:524px;width:241px;height:24px;background:#ffffff;border:1px solid #dcdcdc;box-sizing:border-box;border-radius:3px;"></div>
<div class="t" style="left:1141.00px;top:530.61px;font-size:11.8px;line-height:11.8px;color:#1a1a1a;font-weight:normal;font-style:normal;transform:scaleX(0.9777);transform-origin:0 0;">Send Email</div>
<div class="r" style="left:1050px;top:559px;width:241px;height:24px;background:#ffffff;border:1px solid #dcdcdc;box-sizing:border-box;border-radius:3px;"></div>
<div class="t" style="left:1061.00px;top:565.61px;font-size:11.8px;line-height:11.8px;color:#1a1a1a;font-weight:normal;font-style:normal;">English</div>
<svg class="r" style="left:1270px;top:567.5px;" width="10" height="7" viewBox="0 0 10 7"><path d="M0 0.8 H10 L5 6.8 Z" fill="#111"/></svg>
<div class="r" style="left:1312px;top:524px;width:231px;height:24px;background:#ffffff;border:1px solid #dcdcdc;box-sizing:border-box;border-radius:3px;"></div>
<div class="t" style="left:1323.00px;top:530.61px;font-size:11.8px;line-height:11.8px;color:#1a1a1a;font-weight:normal;font-style:normal;">Suspended</div>
<svg class="r" style="left:1522px;top:532.5px;" width="10" height="7" viewBox="0 0 10 7"><path d="M0 0.8 H10 L5 6.8 Z" fill="#111"/></svg>
<div class="r" style="left:1312px;top:559px;width:114px;height:24px;background:#ffffff;border:1px solid #dcdcdc;box-sizing:border-box;border-radius:3px;"></div>
<div class="t" style="left:1323.00px;top:565.61px;font-size:11.8px;line-height:11.8px;color:#1a1a1a;font-weight:normal;font-style:normal;">Yes</div>
<svg class="r" style="left:1405px;top:567.5px;" width="10" height="7" viewBox="0 0 10 7"><path d="M0 0.8 H10 L5 6.8 Z" fill="#111"/></svg>
<div class="r" style="left:1447px;top:559px;width:96px;height:24px;background:#ffffff;border:1px solid #dcdcdc;box-sizing:border-box;border-radius:3px;"></div>
<div class="t" style="left:1458.00px;top:565.61px;font-size:11.8px;line-height:11.8px;color:#1a1a1a;font-weight:normal;font-style:normal;">No</div>
<svg class="r" style="left:1522px;top:567.5px;" width="10" height="7" viewBox="0 0 10 7"><path d="M0 0.8 H10 L5 6.8 Z" fill="#111"/></svg>
<div class="r" style="left:274px;top:623px;width:1279px;height:1px;background:#dcdcdc;"></div>
<div class="r" style="left:123px;top:658px;width:1430px;height:1px;background:#dcdcdc;"></div>
<div class="r" style="left:1436px;top:624px;width:1px;height:34px;background:#dcdcdc;"></div>
<div class="r" style="left:133px;top:615px;width:18px;height:18px;background:#ffffff;border:1px solid #d4d4d4;box-sizing:border-box;border-radius:2px;"></div>
<div class="t" style="left:184.50px;top:616.92px;font-size:12.5px;line-height:12.5px;color:#1a1a1a;font-weight:normal;font-style:normal;transform:scaleX(1.0420);transform-origin:0 0;">115967</div>
<div class="r" style="left:285px;top:594px;width:240px;height:24px;background:#ffffff;border:1px solid #dcdcdc;box-sizing:border-box;border-radius:3px;"></div>
<div class="t" style="left:296.20px;top:600.71px;font-size:11.8px;line-height:11.8px;color:#1a1a1a;font-weight:normal;font-style:normal;">The OneFive Terrace Fukuoka</div>
<svg class="r" style="left:508px;top:600px;" width="12" height="12" viewBox="0 0 12 12"><path d="M1.5 1.5 L10.5 10.5 M10.5 1.5 L1.5 10.5" stroke="#c4c4c4" stroke-width="1.9"/></svg>
<div class="r" style="left:285px;top:629px;width:240px;height:24px;background:#ffffff;border:1px solid #dcdcdc;box-sizing:border-box;border-radius:3px;"></div>
<div class="r" style="left:296px;top:629px;width:208px;height:24px;overflow:hidden;">
<div class="t" style="left:0.20px;top:6.71px;font-size:11.8px;line-height:11.8px;color:#1a1a1a;font-weight:normal;font-style:normal;transform:scaleX(1.0305);transform-origin:0 0;">info.terrace.onefive@onefivehotels.co.jp</div>
</div>
<svg class="r" style="left:508px;top:635px;" width="12" height="12" viewBox="0 0 12 12"><path d="M1.5 1.5 L10.5 10.5 M10.5 1.5 L1.5 10.5" stroke="#c4c4c4" stroke-width="1.9"/></svg>
<div class="r" style="left:546px;top:594px;width:144px;height:24px;background:#ffffff;border:1px solid #dcdcdc;box-sizing:border-box;border-radius:3px;"></div>
<div class="t" style="left:557.20px;top:600.71px;font-size:11.8px;line-height:11.8px;color:#1a1a1a;font-weight:normal;font-style:normal;transform:scaleX(1.1032);transform-origin:0 0;">81</div>
<svg class="r" style="left:673px;top:600px;" width="12" height="12" viewBox="0 0 12 12"><path d="M1.5 1.5 L10.5 10.5 M10.5 1.5 L1.5 10.5" stroke="#c4c4c4" stroke-width="1.9"/></svg>
<div class="r" style="left:695px;top:594px;width:334px;height:24px;background:#ffffff;border:1px solid #dcdcdc;box-sizing:border-box;border-radius:3px;"></div>
<div class="t" style="left:706.20px;top:600.71px;font-size:11.8px;line-height:11.8px;color:#1a1a1a;font-weight:normal;font-style:normal;transform:scaleX(1.1032);transform-origin:0 0;">123456789</div>
<svg class="r" style="left:1012px;top:600px;" width="12" height="12" viewBox="0 0 12 12"><path d="M1.5 1.5 L10.5 10.5 M10.5 1.5 L1.5 10.5" stroke="#c4c4c4" stroke-width="1.9"/></svg>
<div class="r" style="left:546px;top:629px;width:483px;height:24px;background:#ffffff;border:1px solid #dcdcdc;box-sizing:border-box;border-radius:3px;"></div>
<div class="t" style="left:557.20px;top:635.71px;font-size:11.8px;line-height:11.8px;color:#1a1a1a;font-weight:normal;font-style:normal;transform:scaleX(1.0305);transform-origin:0 0;">info.terrace.onefive@onefivehotels.co.jp</div>
<svg class="r" style="left:1012px;top:635px;" width="12" height="12" viewBox="0 0 12 12"><path d="M1.5 1.5 L10.5 10.5 M10.5 1.5 L1.5 10.5" stroke="#c4c4c4" stroke-width="1.9"/></svg>
<div class="r" style="left:1050px;top:594px;width:241px;height:24px;background:#ffffff;border:1px solid #dcdcdc;box-sizing:border-box;border-radius:3px;"></div>
<div class="t" style="left:1141.00px;top:600.61px;font-size:11.8px;line-height:11.8px;color:#1a1a1a;font-weight:normal;font-style:normal;transform:scaleX(0.9777);transform-origin:0 0;">Send Email</div>
<div class="r" style="left:1050px;top:629px;width:241px;height:24px;background:#ffffff;border:1px solid #dcdcdc;box-sizing:border-box;border-radius:3px;"></div>
<div class="t" style="left:1061.00px;top:635.61px;font-size:11.8px;line-height:11.8px;color:#1a1a1a;font-weight:normal;font-style:normal;">English</div>
<svg class="r" style="left:1270px;top:637.5px;" width="10" height="7" viewBox="0 0 10 7"><path d="M0 0.8 H10 L5 6.8 Z" fill="#111"/></svg>
<div class="r" style="left:1312px;top:594px;width:231px;height:24px;background:#ffffff;border:1px solid #dcdcdc;box-sizing:border-box;border-radius:3px;"></div>
<div class="t" style="left:1323.00px;top:600.61px;font-size:11.8px;line-height:11.8px;color:#1a1a1a;font-weight:normal;font-style:normal;">Suspended</div>
<svg class="r" style="left:1522px;top:602.5px;" width="10" height="7" viewBox="0 0 10 7"><path d="M0 0.8 H10 L5 6.8 Z" fill="#111"/></svg>
<div class="r" style="left:1312px;top:629px;width:114px;height:24px;background:#ffffff;border:1px solid #dcdcdc;box-sizing:border-box;border-radius:3px;"></div>
<div class="t" style="left:1323.00px;top:635.61px;font-size:11.8px;line-height:11.8px;color:#1a1a1a;font-weight:normal;font-style:normal;">Yes</div>
<svg class="r" style="left:1405px;top:637.5px;" width="10" height="7" viewBox="0 0 10 7"><path d="M0 0.8 H10 L5 6.8 Z" fill="#111"/></svg>
<div class="r" style="left:1447px;top:629px;width:96px;height:24px;background:#ffffff;border:1px solid #dcdcdc;box-sizing:border-box;border-radius:3px;"></div>
<div class="t" style="left:1458.00px;top:635.61px;font-size:11.8px;line-height:11.8px;color:#1a1a1a;font-weight:normal;font-style:normal;">No</div>
<svg class="r" style="left:1522px;top:637.5px;" width="10" height="7" viewBox="0 0 10 7"><path d="M0 0.8 H10 L5 6.8 Z" fill="#111"/></svg>
<div class="r" style="left:274px;top:693px;width:1279px;height:1px;background:#dcdcdc;"></div>
<div class="r" style="left:123px;top:728px;width:1430px;height:1px;background:#dcdcdc;"></div>
<div class="r" style="left:1436px;top:694px;width:1px;height:34px;background:#dcdcdc;"></div>
<div class="r" style="left:133px;top:685px;width:18px;height:18px;background:#ffffff;border:1px solid #d4d4d4;box-sizing:border-box;border-radius:2px;"></div>
<div class="t" style="left:184.50px;top:686.92px;font-size:12.5px;line-height:12.5px;color:#1a1a1a;font-weight:normal;font-style:normal;transform:scaleX(1.0189);transform-origin:0 0;">122151</div>
<div class="r" style="left:285px;top:664px;width:240px;height:24px;background:#ffffff;border:1px solid #dcdcdc;box-sizing:border-box;border-radius:3px;"></div>
<div class="t" style="left:296.20px;top:670.71px;font-size:11.8px;line-height:11.8px;color:#1a1a1a;font-weight:normal;font-style:normal;">Mon The One Five Terrace Fukuoka</div>
<svg class="r" style="left:508px;top:670px;" width="12" height="12" viewBox="0 0 12 12"><path d="M1.5 1.5 L10.5 10.5 M10.5 1.5 L1.5 10.5" stroke="#c4c4c4" stroke-width="1.9"/></svg>
<div class="r" style="left:285px;top:699px;width:240px;height:24px;background:#ffffff;border:1px solid #dcdcdc;box-sizing:border-box;border-radius:3px;"></div>
<div class="r" style="left:296px;top:699px;width:208px;height:24px;overflow:hidden;">
<div class="t" style="left:0.20px;top:6.71px;font-size:11.8px;line-height:11.8px;color:#1a1a1a;font-weight:normal;font-style:normal;transform:scaleX(1.0420);transform-origin:0 0;">mon-the-one-five@ohmyhotel.com</div>
</div>
<svg class="r" style="left:508px;top:705px;" width="12" height="12" viewBox="0 0 12 12"><path d="M1.5 1.5 L10.5 10.5 M10.5 1.5 L1.5 10.5" stroke="#c4c4c4" stroke-width="1.9"/></svg>
<div class="r" style="left:546px;top:664px;width:144px;height:24px;background:#ffffff;border:1px solid #dcdcdc;box-sizing:border-box;border-radius:3px;"></div>
<div class="t" style="left:557.20px;top:670.71px;font-size:11.8px;line-height:11.8px;color:#1a1a1a;font-weight:normal;font-style:normal;transform:scaleX(1.1032);transform-origin:0 0;">84</div>
<svg class="r" style="left:673px;top:670px;" width="12" height="12" viewBox="0 0 12 12"><path d="M1.5 1.5 L10.5 10.5 M10.5 1.5 L1.5 10.5" stroke="#c4c4c4" stroke-width="1.9"/></svg>
<div class="r" style="left:695px;top:664px;width:334px;height:24px;background:#ffffff;border:1px solid #dcdcdc;box-sizing:border-box;border-radius:3px;"></div>
<div class="t" style="left:706.20px;top:670.71px;font-size:11.8px;line-height:11.8px;color:#1a1a1a;font-weight:normal;font-style:normal;transform:scaleX(1.1032);transform-origin:0 0;">123456789</div>
<svg class="r" style="left:1012px;top:670px;" width="12" height="12" viewBox="0 0 12 12"><path d="M1.5 1.5 L10.5 10.5 M10.5 1.5 L1.5 10.5" stroke="#c4c4c4" stroke-width="1.9"/></svg>
<div class="r" style="left:546px;top:699px;width:483px;height:24px;background:#ffffff;border:1px solid #dcdcdc;box-sizing:border-box;border-radius:3px;"></div>
<div class="t" style="left:557.20px;top:705.71px;font-size:11.8px;line-height:11.8px;color:#1a1a1a;font-weight:normal;font-style:normal;transform:scaleX(1.0420);transform-origin:0 0;">mon-the-one-five@ohmyhotel.com</div>
<svg class="r" style="left:1012px;top:705px;" width="12" height="12" viewBox="0 0 12 12"><path d="M1.5 1.5 L10.5 10.5 M10.5 1.5 L1.5 10.5" stroke="#c4c4c4" stroke-width="1.9"/></svg>
<div class="r" style="left:1050px;top:664px;width:241px;height:24px;background:#ffffff;border:1px solid #dcdcdc;box-sizing:border-box;border-radius:3px;"></div>
<div class="t" style="left:1141.00px;top:670.61px;font-size:11.8px;line-height:11.8px;color:#1a1a1a;font-weight:normal;font-style:normal;transform:scaleX(0.9777);transform-origin:0 0;">Send Email</div>
<div class="r" style="left:1050px;top:699px;width:241px;height:24px;background:#ffffff;border:1px solid #dcdcdc;box-sizing:border-box;border-radius:3px;"></div>
<div class="t" style="left:1061.00px;top:705.61px;font-size:11.8px;line-height:11.8px;color:#1a1a1a;font-weight:normal;font-style:normal;">English</div>
<svg class="r" style="left:1270px;top:707.5px;" width="10" height="7" viewBox="0 0 10 7"><path d="M0 0.8 H10 L5 6.8 Z" fill="#111"/></svg>
<div class="r" style="left:1312px;top:664px;width:231px;height:24px;background:#ffffff;border:1px solid #dcdcdc;box-sizing:border-box;border-radius:3px;"></div>
<div class="t" style="left:1323.00px;top:670.61px;font-size:11.8px;line-height:11.8px;color:#1a1a1a;font-weight:normal;font-style:normal;">Suspended</div>
<svg class="r" style="left:1522px;top:672.5px;" width="10" height="7" viewBox="0 0 10 7"><path d="M0 0.8 H10 L5 6.8 Z" fill="#111"/></svg>
<div class="r" style="left:1312px;top:699px;width:114px;height:24px;background:#ffffff;border:1px solid #dcdcdc;box-sizing:border-box;border-radius:3px;"></div>
<div class="t" style="left:1323.00px;top:705.61px;font-size:11.8px;line-height:11.8px;color:#1a1a1a;font-weight:normal;font-style:normal;">Yes</div>
<svg class="r" style="left:1405px;top:707.5px;" width="10" height="7" viewBox="0 0 10 7"><path d="M0 0.8 H10 L5 6.8 Z" fill="#111"/></svg>
<div class="r" style="left:1447px;top:699px;width:96px;height:24px;background:#ffffff;border:1px solid #dcdcdc;box-sizing:border-box;border-radius:3px;"></div>
<div class="t" style="left:1458.00px;top:705.61px;font-size:11.8px;line-height:11.8px;color:#1a1a1a;font-weight:normal;font-style:normal;">No</div>
<svg class="r" style="left:1522px;top:707.5px;" width="10" height="7" viewBox="0 0 10 7"><path d="M0 0.8 H10 L5 6.8 Z" fill="#111"/></svg>
<div class="r" style="left:274px;top:763px;width:1279px;height:1px;background:#dcdcdc;"></div>
<div class="r" style="left:1436px;top:764px;width:1px;height:34px;background:#dcdcdc;"></div>
<div class="r" style="left:133px;top:755px;width:18px;height:18px;background:#ffffff;border:1px solid #d4d4d4;box-sizing:border-box;border-radius:2px;"></div>
<div class="t" style="left:184.50px;top:756.92px;font-size:12.5px;line-height:12.5px;color:#1a1a1a;font-weight:normal;font-style:normal;transform:scaleX(1.0189);transform-origin:0 0;">122481</div>
<div class="r" style="left:285px;top:734px;width:240px;height:24px;background:#ffffff;border:1px solid #dcdcdc;box-sizing:border-box;border-radius:3px;"></div>
<div class="t" style="left:296.20px;top:740.71px;font-size:11.8px;line-height:11.8px;color:#1a1a1a;font-weight:normal;font-style:normal;transform:scaleX(1.0219);transform-origin:0 0;">check</div>
<svg class="r" style="left:508px;top:740px;" width="12" height="12" viewBox="0 0 12 12"><path d="M1.5 1.5 L10.5 10.5 M10.5 1.5 L1.5 10.5" stroke="#c4c4c4" stroke-width="1.9"/></svg>
<div class="r" style="left:285px;top:769px;width:240px;height:24px;background:#ffffff;border:1px solid #dcdcdc;box-sizing:border-box;border-radius:3px;"></div>
<div class="r" style="left:296px;top:769px;width:208px;height:24px;overflow:hidden;">
<div class="t" style="left:0.20px;top:6.71px;font-size:11.8px;line-height:11.8px;color:#1a1a1a;font-weight:normal;font-style:normal;transform:scaleX(1.0065);transform-origin:0 0;">test.againnnnnn@gmail.com</div>
</div>
<svg class="r" style="left:508px;top:775px;" width="12" height="12" viewBox="0 0 12 12"><path d="M1.5 1.5 L10.5 10.5 M10.5 1.5 L1.5 10.5" stroke="#c4c4c4" stroke-width="1.9"/></svg>
<div class="r" style="left:546px;top:734px;width:144px;height:24px;background:#ffffff;border:1px solid #dcdcdc;box-sizing:border-box;border-radius:3px;"></div>
<div class="t" style="left:557.20px;top:740.71px;font-size:11.8px;line-height:11.8px;color:#1a1a1a;font-weight:normal;font-style:normal;transform:scaleX(1.1032);transform-origin:0 0;">81</div>
<svg class="r" style="left:673px;top:740px;" width="12" height="12" viewBox="0 0 12 12"><path d="M1.5 1.5 L10.5 10.5 M10.5 1.5 L1.5 10.5" stroke="#c4c4c4" stroke-width="1.9"/></svg>
<div class="r" style="left:695px;top:734px;width:334px;height:24px;background:#ffffff;border:1px solid #dcdcdc;box-sizing:border-box;border-radius:3px;"></div>
<div class="t" style="left:706.20px;top:740.71px;font-size:11.8px;line-height:11.8px;color:#1a1a1a;font-weight:normal;font-style:normal;transform:scaleX(1.2490);transform-origin:0 0;">11111111</div>
<svg class="r" style="left:1012px;top:740px;" width="12" height="12" viewBox="0 0 12 12"><path d="M1.5 1.5 L10.5 10.5 M10.5 1.5 L1.5 10.5" stroke="#c4c4c4" stroke-width="1.9"/></svg>
<div class="r" style="left:546px;top:769px;width:483px;height:24px;background:#ffffff;border:1px solid #dcdcdc;box-sizing:border-box;border-radius:3px;"></div>
<div class="t" style="left:557.20px;top:775.71px;font-size:11.8px;line-height:11.8px;color:#1a1a1a;font-weight:normal;font-style:normal;transform:scaleX(1.0065);transform-origin:0 0;">test.againnnnnn@gmail.com</div>
<svg class="r" style="left:1012px;top:775px;" width="12" height="12" viewBox="0 0 12 12"><path d="M1.5 1.5 L10.5 10.5 M10.5 1.5 L1.5 10.5" stroke="#c4c4c4" stroke-width="1.9"/></svg>
<div class="r" style="left:1050px;top:734px;width:241px;height:24px;background:#ffffff;border:1px solid #dcdcdc;box-sizing:border-box;border-radius:3px;"></div>
<div class="t" style="left:1141.00px;top:740.61px;font-size:11.8px;line-height:11.8px;color:#1a1a1a;font-weight:normal;font-style:normal;transform:scaleX(0.9777);transform-origin:0 0;">Send Email</div>
<div class="r" style="left:1050px;top:769px;width:241px;height:24px;background:#ffffff;border:1px solid #dcdcdc;box-sizing:border-box;border-radius:3px;"></div>
<div class="t" style="left:1061.00px;top:775.61px;font-size:11.8px;line-height:11.8px;color:#1a1a1a;font-weight:normal;font-style:normal;">English</div>
<svg class="r" style="left:1270px;top:777.5px;" width="10" height="7" viewBox="0 0 10 7"><path d="M0 0.8 H10 L5 6.8 Z" fill="#111"/></svg>
<div class="r" style="left:1312px;top:734px;width:231px;height:24px;background:#ffffff;border:1px solid #dcdcdc;box-sizing:border-box;border-radius:3px;"></div>
<div class="t" style="left:1323.00px;top:740.61px;font-size:11.8px;line-height:11.8px;color:#1a1a1a;font-weight:normal;font-style:normal;">Normal Use</div>
<svg class="r" style="left:1522px;top:742.5px;" width="10" height="7" viewBox="0 0 10 7"><path d="M0 0.8 H10 L5 6.8 Z" fill="#111"/></svg>
<div class="r" style="left:1312px;top:769px;width:114px;height:24px;background:#ffffff;border:1px solid #dcdcdc;box-sizing:border-box;border-radius:3px;"></div>
<div class="t" style="left:1323.00px;top:775.61px;font-size:11.8px;line-height:11.8px;color:#1a1a1a;font-weight:normal;font-style:normal;">Yes</div>
<svg class="r" style="left:1405px;top:777.5px;" width="10" height="7" viewBox="0 0 10 7"><path d="M0 0.8 H10 L5 6.8 Z" fill="#111"/></svg>
<div class="r" style="left:1447px;top:769px;width:96px;height:24px;background:#ffffff;border:1px solid #dcdcdc;box-sizing:border-box;border-radius:3px;"></div>
<div class="t" style="left:1458.00px;top:775.61px;font-size:11.8px;line-height:11.8px;color:#1a1a1a;font-weight:normal;font-style:normal;">No</div>
<svg class="r" style="left:1522px;top:777.5px;" width="10" height="7" viewBox="0 0 10 7"><path d="M0 0.8 H10 L5 6.8 Z" fill="#111"/></svg>
<div class="r" style="left:123px;top:798px;width:1430px;height:1px;background:#777777;"></div>
<div class="r" style="left:101px;top:726px;width:1486px;height:87px;border:4px solid #e41c23;box-sizing:border-box;"></div>
<div class="r" style="left:0px;top:0px;width:2px;height:881px;background:#000;"></div>
<div class="r" style="left:0px;top:0px;width:1771px;height:2px;background:#000;"></div>
<div class="r" style="left:1769px;top:0px;width:2px;height:881px;background:#000;"></div>
<div class="r" style="left:0px;top:879px;width:1771px;height:2px;background:#000;"></div>
</body></html>
